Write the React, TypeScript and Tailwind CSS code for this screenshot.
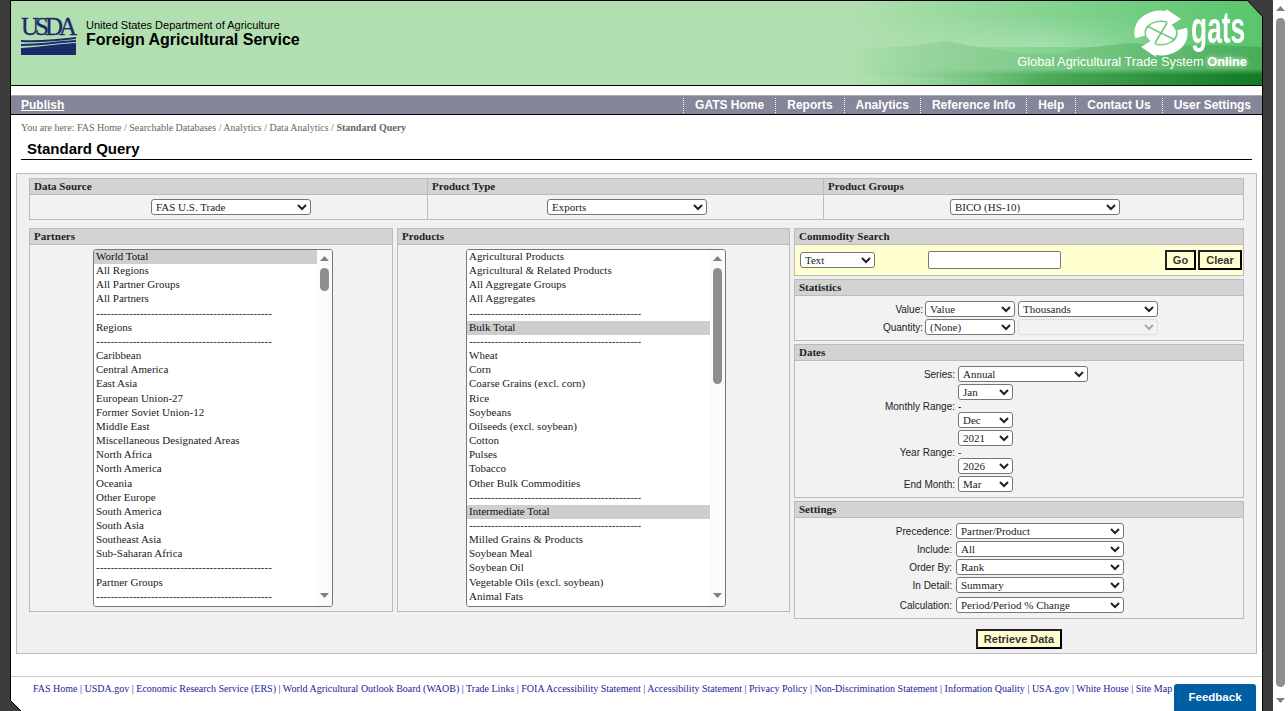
import React from "react";

const DASH = "------------------------------------------------";
const DASH_SHORT = "-----------------------------------------------";

const partners = [
  "World Total", "All Regions", "All Partner Groups", "All Partners", DASH, "Regions", DASH,
  "Caribbean", "Central America", "East Asia", "European Union-27", "Former Soviet Union-12", "Middle East",
  "Miscellaneous Designated Areas", "North Africa", "North America", "Oceania", "Other Europe", "South America",
  "South Asia", "Southeast Asia", "Sub-Saharan Africa", DASH, "Partner Groups", DASH,
];

const products = [
  "Agricultural Products", "Agricultural & Related Products", "All Aggregate Groups", "All Aggregates", DASH_SHORT,
  "Bulk Total", DASH_SHORT, "Wheat", "Corn", "Coarse Grains (excl. corn)", "Rice", "Soybeans", "Oilseeds (excl. soybean)",
  "Cotton", "Pulses", "Tobacco", "Other Bulk Commodities", DASH_SHORT, "Intermediate Total", DASH_SHORT,
  "Milled Grains & Products", "Soybean Meal", "Soybean Oil", "Vegetable Oils (excl. soybean)", "Animal Fats",
];

const footerLinks = ["FAS Home", "USDA.gov", "Economic Research Service (ERS)", "World Agricultural Outlook Board (WAOB)", "Trade Links", "FOIA Accessibility Statement", "Accessibility Statement", "Privacy Policy", "Non-Discrimination Statement", "Information Quality", "USA.gov", "White House", "Site Map"];

const navItems = ["GATS Home", "Reports", "Analytics", "Reference Info", "Help", "Contact Us", "User Settings"];

function Pick({ value, className = "" }: { value: string; className?: string }) {
  return (
    <select
      defaultValue={value}
      className={`h-4 shrink-0 rounded-[3px] border border-[#767676] bg-white font-['Liberation_Serif',serif] text-[11px] leading-[13px] text-[#222] ${className}`}
    >
      <option>{value}</option>
    </select>
  );
}

function Arrow({ up }: { up?: boolean }) {
  return (
    <svg className="h-[5px] w-[9px] shrink-0" viewBox="0 0 9 5">
      <path d={up ? "M4.5 0 L9 5 L0 5 Z" : "M0 0 L9 0 L4.5 5 Z"} fill="#808080" />
    </svg>
  );
}

// native scrollbars don't get painted by the headless browser, so draw them
function ScrollBar({ thumb, className = "" }: { thumb: string; className?: string }) {
  return (
    <div className={`flex shrink-0 flex-col items-center ${className}`}>
      <Arrow up />
      <div className={`mt-[7px] w-[9px] rounded-full bg-[#8e8e8e] ${thumb}`} />
      <div className="mt-auto">
        <Arrow />
      </div>
    </div>
  );
}

function ListBox({ items, selected, listW, thumb, className }: { items: string[]; selected: string[]; listW: string; thumb: string; className: string }) {
  return (
    <div className={`flex h-[358px] overflow-hidden rounded-[3px] border border-[#767676] bg-white ${className}`}>
      <select
        multiple
        defaultValue={selected}
        className={`h-full bg-white font-['Liberation_Serif',serif] text-[11px] text-[#222] [&>option]:min-h-[14.17px] [&>option]:px-0.5 ${listW}`}
      >
        {items.map((it, i) => (
          <option key={i} value={it === DASH || it === DASH_SHORT ? `dash-${i}` : it}>
            {it}
          </option>
        ))}
      </select>
      <ScrollBar thumb={thumb} className="w-[15px] bg-[#fbfbfb] pt-[6px] pb-2" />
    </div>
  );
}

function PanelHead({ children }: { children: React.ReactNode }) {
  return (
    <div className="flex h-4 items-center border-b border-[#bbb] bg-[#d3d3d3] pl-1 font-['Liberation_Serif',serif] text-[11px] font-bold text-[#222]">
      {children}
    </div>
  );
}

function FormRow({ label, labelW, children }: { label: string; labelW: string; children: React.ReactNode }) {
  return (
    <div className="flex items-center">
      <span className={`pt-0.5 text-right font-['Liberation_Sans',sans-serif] text-[10px] leading-[12px] text-[#222] ${labelW}`}>{label}</span>
      {children}
    </div>
  );
}

function YellowButton({ children, className = "" }: { children: React.ReactNode; className?: string }) {
  return (
    <button className={`h-5 border-2 border-black border-t-[#222] border-l-[#222] bg-[#ffffd0] font-['Liberation_Sans',sans-serif] text-[11px] font-bold text-[#333] ${className}`}>
      {children}
    </button>
  );
}

function RangeStack({ from, to }: { from: string; to: string }) {
  return (
    <div className="flex flex-col items-start text-[10px] text-[#222]">
      <Pick value={from} className="w-[55px]" />
      <span className="h-3 pt-px leading-[12px]">-</span>
      <Pick value={to} className="w-[55px]" />
    </div>
  );
}

function Banner() {
  return (
    <svg className="absolute top-0 right-0 h-[84px] w-[432px]" viewBox="0 0 432 84" preserveAspectRatio="none">
      <defs>
        <linearGradient id="sky" x1="0" x2="1" y1="0" y2="0">
          <stop offset="0" stopColor="#b2dfb0" stopOpacity="0" />
          <stop offset="0.12" stopColor="#a9dda9" />
          <stop offset="0.6" stopColor="#7bd18a" />
          <stop offset="1" stopColor="#58c56c" />
        </linearGradient>
        <linearGradient id="haze" x1="0" x2="0" y1="0" y2="1">
          <stop offset="0" stopColor="#fff" stopOpacity="0" />
          <stop offset="1" stopColor="#fff" stopOpacity="0.28" />
        </linearGradient>
        <linearGradient id="fade" x1="0" x2="1" y1="0" y2="0">
          <stop offset="0" stopColor="#000" />
          <stop offset="0.5" stopColor="#fff" />
          <stop offset="0.85" stopColor="#000" />
        </linearGradient>
        <mask id="hazeMask">
          <rect width="432" height="84" fill="url(#fade)" />
        </mask>
        <linearGradient id="hill" x1="0" x2="1" y1="0" y2="0">
          <stop offset="0" stopColor="#9ed8a2" stopOpacity="0" />
          <stop offset="0.2" stopColor="#96d49c" />
          <stop offset="0.6" stopColor="#72c47e" />
          <stop offset="1" stopColor="#48ac58" />
        </linearGradient>
        <linearGradient id="ground" x1="0" x2="1" y1="0" y2="0">
          <stop offset="0.1" stopColor="#8ed198" stopOpacity="0" />
          <stop offset="0.5" stopColor="#4bab58" />
          <stop offset="1" stopColor="#117a24" />
        </linearGradient>
        <linearGradient id="groundV" x1="0" x2="0" y1="0" y2="1">
          <stop offset="0" stopColor="#000" />
          <stop offset="0.35" stopColor="#fff" />
        </linearGradient>
        <mask id="groundMask">
          <rect y="68" width="432" height="16" fill="url(#groundV)" />
        </mask>
      </defs>
      <rect width="432" height="84" fill="url(#sky)" />
      <rect y="14" width="432" height="32" fill="url(#haze)" mask="url(#hazeMask)" />
      <path
        d="M20 48 L70 46 L117 40 L135 44 L190 52 L225 53 L255 47 L300 42 L340 45 L385 44 L432 46 L432 76 L20 76 Z"
        fill="url(#hill)"
      />
      <rect y="68" width="432" height="16" fill="url(#ground)" mask="url(#groundMask)" />
    </svg>
  );
}

function GatsMark() {
  return (
    <svg className="h-[50px] w-[56px] shrink-0" viewBox="0 0 56 50" fill="none">
      <path d="M7 29 C3 14 20 4 37 9" stroke="#fff" strokeWidth="10" />
      <path d="M33 1 L48 11 L35 19 Z" fill="#fff" />
      <path d="M49 21 C53 36 36 46 19 41" stroke="#fff" strokeWidth="10" />
      <path d="M23 49 L8 39 L21 31 Z" fill="#fff" />
      <ellipse cx="28" cy="25" rx="15" ry="11" fill="#fff" />
      <path d="M14 18 L28 25 L22 35 M42 32 L28 25 L34 15" stroke="#66c878" strokeWidth="1.5" />
    </svg>
  );
}

export default function App() {
  return (
    <div className="flex h-[711px] overflow-hidden bg-white font-['Liberation_Sans',sans-serif]">
      <div className="w-[1273px] shrink-0 bg-[#3c3c3c] px-[10px]">
        <div className="relative h-[711px] border-x border-black bg-white">
          {/* banner */}
          <header className="relative flex h-[86px] border-y border-black bg-[#b2dfb0]">
            <Banner />
            <svg className="absolute -top-px -right-px h-[17px] w-[16px]" viewBox="0 0 16 17">
              <path d="M0 0 L16 17 L16 0 Z" fill="#3c3c3c" />
              <path d="M0 0 L16 17" stroke="#000" strokeWidth="1" />
            </svg>
            <div className="relative mt-[16px] ml-[10px] flex h-[38px] w-[55px] flex-col">
              <span className="block h-[20px] font-['Liberation_Serif',serif] text-[25px] leading-[20px] tracking-[-4px] whitespace-nowrap text-[#1b2a6b] [-webkit-text-stroke:0.3px_#1b2a6b]">
                USDA
              </span>
              <svg className="h-[18px] w-[55px]" viewBox="0 0 55 18">
                <path d="M0 3 C18 4 36 2 55 0 V2 C36 4 18 6 0 5 Z" fill="#1b2a6b" />
                <path d="M0 7 C18 7 36 4 55 3 V5 C36 6 18 9 0 9 Z" fill="#1b2a6b" />
                <path d="M0 11 C18 10 36 7 55 6 V18 H0 Z" fill="#1b2a6b" />
              </svg>
            </div>
            <div className="relative mt-[17px] ml-[10px] text-black">
              <div className="text-[11px] leading-[14px] whitespace-nowrap">United States Department of Agriculture</div>
              <div className="text-[16px] leading-[16px] font-bold whitespace-nowrap">Foreign Agricultural Service</div>
            </div>
            <div className="relative mt-[7px] mr-[15px] ml-auto flex flex-col items-end">
              <div className="flex h-[47px] items-start">
                <GatsMark />
                <span className="mt-[-2px] ml-[2px] block w-[56px] origin-left scale-x-[.6] text-[44px] leading-[44px] font-bold whitespace-nowrap text-white">
                  gats
                </span>
              </div>
              <div className="text-[12.8px] leading-[14px] whitespace-nowrap text-white">
                Global Agricultural Trade System <b className="[text-shadow:0_0_5px_#fff]">Online</b>
              </div>
            </div>
          </header>

          {/* nav */}
          <nav className="mt-[9px] flex h-5 items-center justify-between border-t border-b border-t-[#a8a9b5] border-b-black bg-[#85869a] text-[12px] font-bold text-white">
            <a className="ml-[10px] underline">Publish</a>
            <ul className="flex">
              {navItems.map((n) => (
                <li key={n} className="border-l border-dotted border-l-white px-[11px] leading-[15px] whitespace-nowrap">
                  {n}
                </li>
              ))}
            </ul>
          </nav>

          <div className="flex h-6 items-center pl-[10px] font-['Liberation_Serif',serif] text-[10px] text-[#666]">
            You are here: FAS Home / Searchable Databases / Analytics / Data Analytics /&nbsp;<b>Standard Query</b>
          </div>
          <h1 className="mx-[10px] flex h-[21px] items-center border-b border-black pl-1.5 text-[15px] font-bold text-black">
            Standard Query
          </h1>

          {/* form */}
          <div className="mx-[5px] mt-[13px] border border-[#bbb] bg-[#f0f0f0] px-3 py-1">
            <div className="grid h-[42px] w-[1215px] grid-cols-[397px_396px_420px] border border-[#bbb] bg-[#f2f2f2]">
              <div>
                <PanelHead>Data Source</PanelHead>
                <div className="flex justify-center pt-1 pl-[5px]">
                  <Pick value="FAS U.S. Trade" className="w-40" />
                </div>
              </div>
              <div className="border-l border-[#bbb]">
                <PanelHead>Product Type</PanelHead>
                <div className="flex justify-center pt-1 pl-[3px]">
                  <Pick value="Exports" className="w-40" />
                </div>
              </div>
              <div className="border-l border-[#bbb]">
                <PanelHead>Product Groups</PanelHead>
                <div className="flex justify-center pt-1 pl-[3px]">
                  <Pick value="BICO (HS-10)" className="w-[170px]" />
                </div>
              </div>
            </div>

            <div className="mt-2 flex items-start gap-1">
              <section className="h-[384px] w-[364px] border border-[#bbb] bg-[#f2f2f2]">
                <PanelHead>Partners</PanelHead>
                <div className="pt-[4px] pl-[63px]">
                  <ListBox items={partners} selected={["World Total"]} listW="w-[223px]" thumb="h-[23px]" className="w-60" />
                </div>
              </section>
              <section className="h-[384px] w-[393px] border border-[#bbb] bg-[#f2f2f2]">
                <PanelHead>Products</PanelHead>
                <div className="pt-[4px] pl-[68px]">
                  <ListBox items={products} selected={["Bulk Total", "Intermediate Total"]} listW="w-[243px]" thumb="h-[116px]" className="w-[260px]" />
                </div>
              </section>

              <div className="flex w-[450px] flex-col gap-[3px]">
                <section className="border border-[#bbb]">
                  <PanelHead>Commodity Search</PanelHead>
                  <div className="flex h-[30px] items-center bg-[#ffffd0] pr-px pl-[5px]">
                    <Pick value="Text" className="w-[75px]" />
                    <input className="ml-[53px] h-[18px] w-[133px] rounded-[2px] border border-[#767676] bg-white" />
                    <YellowButton className="ml-auto w-[31px]">Go</YellowButton>
                    <YellowButton className="ml-0.5 w-11">Clear</YellowButton>
                  </div>
                </section>

                <section className="border border-[#bbb] bg-[#f2f2f2]">
                  <PanelHead>Statistics</PanelHead>
                  <div className="flex h-11 flex-col gap-0.5 pt-[5px]">
                    <FormRow label="Value:" labelW="w-[130px] pr-0.5">
                      <Pick value="Value" className="w-[90px]" />
                      <Pick value="Thousands" className="ml-[3px] w-[140px]" />
                    </FormRow>
                    <FormRow label="Quantity:" labelW="w-[130px] pr-0.5">
                      <Pick value="(None)" className="w-[90px]" />
                      <select disabled className="ml-[3px] h-4 w-[140px] rounded-[3px] border border-[#ddd] bg-[#f2f2f2] text-[#aaa]" />
                    </FormRow>
                  </div>
                </section>

                <section className="border border-[#bbb] bg-[#f2f2f2]">
                  <PanelHead>Dates</PanelHead>
                  <div className="flex h-[136px] flex-col gap-0.5 pt-[5px]">
                    <FormRow label="Series:" labelW="w-[163px] pr-[3px]">
                      <Pick value="Annual" className="w-[130px]" />
                    </FormRow>
                    <FormRow label="Monthly Range:" labelW="w-[163px] pr-[3px]">
                      <RangeStack from="Jan" to="Dec" />
                    </FormRow>
                    <FormRow label="Year Range:" labelW="w-[163px] pr-[3px]">
                      <RangeStack from="2021" to="2026" />
                    </FormRow>
                    <FormRow label="End Month:" labelW="w-[163px] pr-[3px]">
                      <Pick value="Mar" className="w-[55px]" />
                    </FormRow>
                  </div>
                </section>

                <section className="border border-[#bbb] bg-[#f2f2f2]">
                  <PanelHead>Settings</PanelHead>
                  <div className="flex h-[100px] flex-col gap-0.5 pt-[5px]">
                    <FormRow label="Precedence:" labelW="w-[161px] pr-1">
                      <Pick value="Partner/Product" className="w-[168px]" />
                    </FormRow>
                    <FormRow label="Include:" labelW="w-[161px] pr-1">
                      <Pick value="All" className="w-[168px]" />
                    </FormRow>
                    <FormRow label="Order By:" labelW="w-[161px] pr-1">
                      <Pick value="Rank" className="w-[168px]" />
                    </FormRow>
                    <FormRow label="In Detail:" labelW="w-[161px] pr-1">
                      <Pick value="Summary" className="w-[168px]" />
                    </FormRow>
                    <div className="mt-[2px]">
                      <FormRow label="Calculation:" labelW="w-[161px] pr-1">
                        <Pick value="Period/Period % Change" className="w-[168px]" />
                      </FormRow>
                    </div>
                  </div>
                </section>

                <div className="mt-[7px] flex justify-center">
                  <YellowButton className="w-[86px]">Retrieve Data</YellowButton>
                </div>
              </div>
            </div>
          </div>

          {/* footer */}
          <footer className="mt-[22px] overflow-hidden border-t border-[#ccc] pt-[6px] pl-[22px] font-['Liberation_Serif',serif] text-[10px] leading-[12px] whitespace-nowrap text-[#22229a]">
            {footerLinks.map((l, i) => (
              <span key={l}>
                {i > 0 && " | "}
                {l}
              </span>
            ))}
          </footer>

          <svg className="absolute -bottom-px -left-px h-[12px] w-[12px]" viewBox="0 0 12 12">
            <path d="M0 0 L12 12 L0 12 Z" fill="#3c3c3c" />
            <path d="M0 0 L12 12" stroke="#000" />
          </svg>
        </div>
      </div>

      {/* page scrollbar */}
      <ScrollBar thumb="h-[669px]" className="h-[711px] w-[15px] pt-[6px] pb-2" />

      <button className="fixed right-8 bottom-0 h-[27px] w-[82px] rounded-t-[3px] bg-[#005ea2] text-[11.5px] font-bold text-white">
        Feedback
      </button>
    </div>
  );
}
